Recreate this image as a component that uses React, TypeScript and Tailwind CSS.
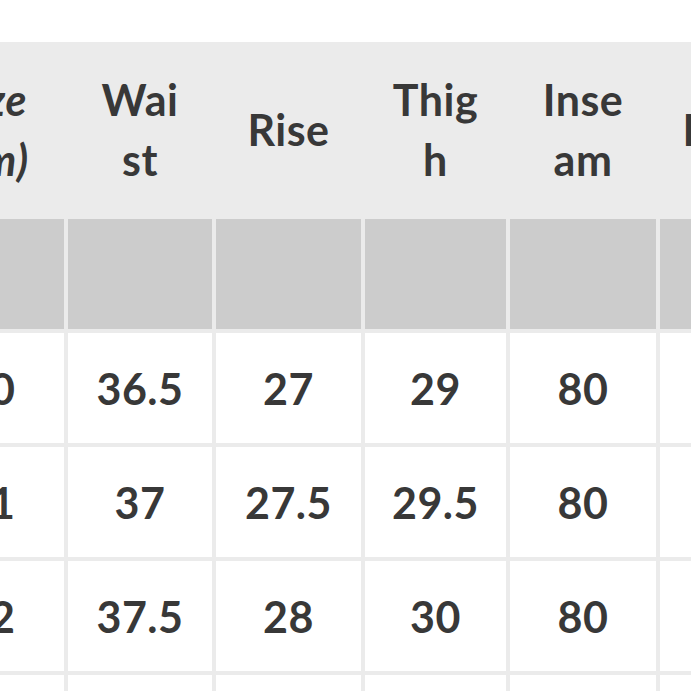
const header: { label: string[]; italic?: boolean }[] = [
  { label: ['Size', '(cm)'], italic: true },
  { label: ['Wai', 'st'] },
  { label: ['Rise'] },
  { label: ['Thig', 'h'] },
  { label: ['Inse', 'am'] },
  { label: ['Hem'] },
];

const rows = [
  ['30', '36.5', '27', '29', '80', '20'],
  ['31', '37', '27.5', '29.5', '80', '21'],
  ['32', '37.5', '28', '30', '80', '21'],
  ['33', '38', '28.5', '30.5', '80', '22'],
];

export default function App() {
  return (
    <div className="h-[691px] w-[691px] overflow-hidden bg-white pt-[42px]">
      <div className="ml-[-84px] grid w-max grid-cols-[148px_144px_145px_141px_146px_138px] grid-rows-[173px_110px_110px_110px_110px_110px] gap-[4px] bg-[#ebebeb] font-['Lato','Liberation_Sans',sans-serif] text-[43px] font-bold tracking-[0.5px] text-[#383838]">
        {header.map((h, i) => (
          <div
            key={i}
            className={`flex flex-col items-center justify-center bg-[#ebebeb] pt-[3px] text-center leading-[60px] ${h.italic ? 'italic' : ''}`}
          >
            {h.label.map((line, j) => (
              <span key={j}>{line}</span>
            ))}
          </div>
        ))}

        {header.map((_, i) => (
          <div key={'g' + i} className="bg-[#cccccc]" />
        ))}

        {rows.map((row, r) =>
          row.map((cell, c) => (
            <div key={r + '-' + c} className="flex items-center justify-center bg-white leading-none">
              {cell}
            </div>
          ))
        )}
      </div>
    </div>
  );
}
